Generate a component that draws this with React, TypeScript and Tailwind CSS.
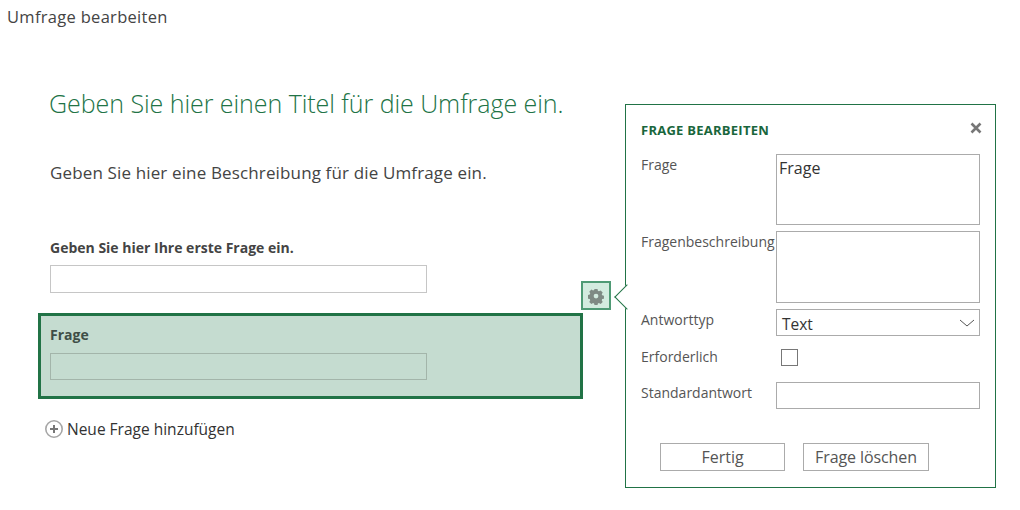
import React from "react";

const FieldLabel = ({ children }: { children: React.ReactNode }) => (
  <span className="w-[135px] shrink-0 pt-[1px] text-[14px] leading-[20px] text-[#555555]">
    {children}
  </span>
);

const App = () => {
  return (
    <div className="relative h-[510px] w-[1020px] overflow-hidden bg-white font-['Open_Sans',sans-serif]">
      <div className="pl-[7px] pt-[6px] text-[16.5px] leading-[22px] text-[#444444] tracking-[0.3px]">
        Umfrage bearbeiten
      </div>

      <div className="ml-[38px] flex w-[545px] flex-col">
        <h1 className="mt-[57px] whitespace-nowrap pl-[11px] text-[25px] font-light leading-[36px] text-[#217346] tracking-[-0.05px]">
          Geben Sie hier einen Titel für die Umfrage ein.
        </h1>
        <p className="mt-[40px] pl-[12px] text-[17px] leading-[24px] text-[#444444] tracking-[0.14px]">
          Geben Sie hier eine Beschreibung für die Umfrage ein.
        </p>

        <div className="mt-[53px] pl-[12px]">
          <div className="text-[14px] font-bold leading-[20px] text-[#444444]">
            Geben Sie hier Ihre erste Frage ein.
          </div>
          <div className="mt-[7px] h-[28px] w-[377px] border border-[#c6c6c6] bg-white" />
        </div>

        <div className="mt-[20px] h-[86px] border-[3px] border-[#217346] bg-[#c5dcd0] pl-[9px] pt-[9px]">
          <div className="text-[14px] font-bold leading-[20px] text-[#3f4f47]">Frage</div>
          <div className="mt-[8px] h-[27px] w-[377px] border border-[#a3b5aa]" />
        </div>

        <div className="mt-[19px] flex items-center gap-[3px] pl-[6px]">
          <svg width="20" height="20" viewBox="-1 -1 20 20">
            <circle cx="9" cy="9" r="8.2" fill="#fff" stroke="#a6a6a6" strokeWidth="1.6" />
            <path d="M9 5v8M5 9h8" stroke="#777777" strokeWidth="2" />
          </svg>
          <span className="text-[15.5px] leading-[22px] text-[#333333]">
            Neue Frage hinzufügen
          </span>
        </div>
      </div>

      {/* gear button */}
      <div className="absolute left-[581px] top-[281px] flex h-[29px] w-[30px] items-center justify-center border-2 border-[#4f9a75] bg-[#d3ebdf]">
        <svg width="18" height="18" viewBox="0 0 18 18" fill="#7f8a84">
          <path
            fillRule="evenodd"
            d="M7.3 1h3.4l.4 2.2 1.2.6 2-1 2.3 2.4-1.1 1.9.5 1.2 2 .6v3.2l-2 .5-.5 1.2 1.1 2-2.3 2.3-2-1.1-1.2.5-.4 2H7.3l-.5-2-1.2-.5-1.9 1.1-2.4-2.3 1.1-2-.5-1.2-2-.5V7.9l2-.6.5-1.2-1.1-1.9 2.4-2.4 1.9 1 1.2-.6zM9 6.4a2.7 2.7 0 1 0 0 5.4 2.7 2.7 0 0 0 0-5.4z"
            transform="translate(1.1 1) scale(0.88)"
          />
        </svg>
      </div>

      {/* edit panel */}
      <div className="absolute left-[625px] top-[104px] h-[384px] w-[371px] border border-[#217346] bg-white">
        <div className="absolute left-[-8px] top-[183px] h-[18px] w-[18px] rotate-45 border-b border-l border-[#217346] bg-white" />

        <div className="relative flex h-full flex-col px-[15px]">
          <div className="flex h-[49px] items-end justify-between pb-[15px]">
            <span className="text-[13px] font-bold leading-[18px] text-[#19663c] tracking-[0.25px]">
              FRAGE BEARBEITEN
            </span>
            <svg width="12" height="12" viewBox="0 0 12 12" className="mb-[5px] mr-[-2px]">
              <path d="M1.5 1.5l9 9M10.5 1.5l-9 9" stroke="#777777" strokeWidth="2.6" />
            </svg>
          </div>

          <div className="flex">
            <FieldLabel>Frage</FieldLabel>
            <div className="h-[71px] w-[204px] border border-[#ababab] pl-[2px] text-[16px] leading-[27px] text-[#333333]">
              Frage
            </div>
          </div>

          <div className="mt-[6px] flex">
            <FieldLabel>
              <span className="whitespace-nowrap">Fragenbeschreibung</span>
            </FieldLabel>
            <div className="h-[72px] w-[204px] border border-[#ababab]" />
          </div>

          <div className="mt-[6px] flex">
            <FieldLabel>Antworttyp</FieldLabel>
            <div className="flex h-[27px] w-[204px] items-center justify-between border border-[#ababab] pl-[5px] pr-[4px] pt-[4px] text-[15.5px] text-[#333333]">
              <span>Text</span>
              <svg width="16" height="8" viewBox="0 0 16 8" fill="none" className="mb-[4px]">
                <path d="M1 1l7 6 7-6" stroke="#555555" strokeWidth="1" />
              </svg>
            </div>
          </div>

          <div className="mt-[11px] flex h-[20px] items-center">
            <span className="w-[135px] shrink-0 text-[14px] leading-[20px] text-[#555555]">
              Erforderlich
            </span>
            <div className="ml-[5px] h-[17px] w-[17px] border border-[#777777]" />
          </div>

          <div className="mt-[15px] flex">
            <FieldLabel>Standardantwort</FieldLabel>
            <div className="h-[27px] w-[204px] border border-[#ababab]" />
          </div>

          <div className="mt-[34px] flex gap-[18px] pl-[19px]">
            <button className="h-[28px] w-[125px] border border-[#ababab] text-[16px] leading-[26px] text-[#555555]">
              Fertig
            </button>
            <button className="h-[28px] w-[126px] whitespace-nowrap border border-[#ababab] text-[16px] leading-[26px] text-[#555555] tracking-[-0.1px]">
              Frage löschen
            </button>
          </div>
        </div>
      </div>
    </div>
  );
};

export default App;
